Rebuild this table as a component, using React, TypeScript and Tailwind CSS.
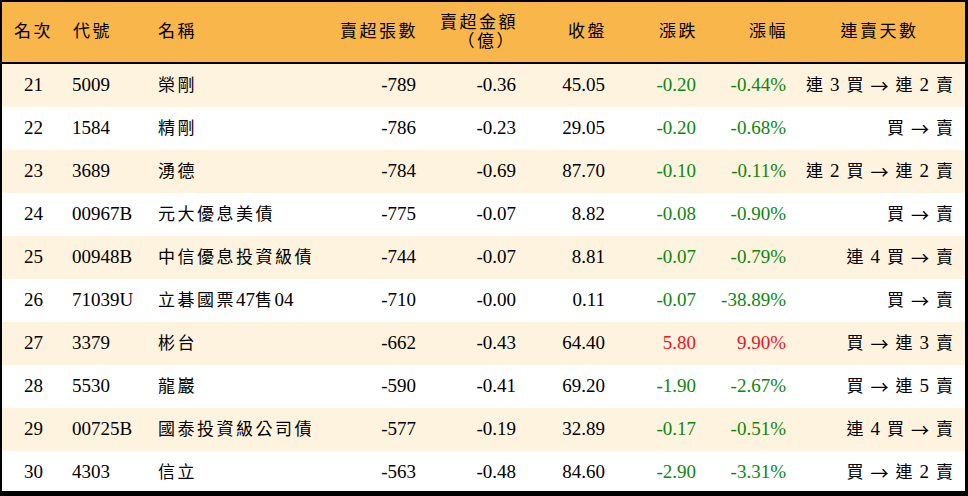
const rows = [
  { rank: 21, code: "5009", name: "榮剛", lots: "-789", amt: "-0.36", close: "45.05", chg: "-0.20", pct: "-0.44%", streak: "連 3 買 → 連 2 賣" },
  { rank: 22, code: "1584", name: "精剛", lots: "-786", amt: "-0.23", close: "29.05", chg: "-0.20", pct: "-0.68%", streak: "買 → 賣" },
  { rank: 23, code: "3689", name: "湧德", lots: "-784", amt: "-0.69", close: "87.70", chg: "-0.10", pct: "-0.11%", streak: "連 2 買 → 連 2 賣" },
  { rank: 24, code: "00967B", name: "元大優息美債", lots: "-775", amt: "-0.07", close: "8.82", chg: "-0.08", pct: "-0.90%", streak: "買 → 賣" },
  { rank: 25, code: "00948B", name: "中信優息投資級債", lots: "-744", amt: "-0.07", close: "8.81", chg: "-0.07", pct: "-0.79%", streak: "連 4 買 → 賣" },
  { rank: 26, code: "71039U", name: "立碁國票47售04", lots: "-710", amt: "-0.00", close: "0.11", chg: "-0.07", pct: "-38.89%", streak: "買 → 賣" },
  { rank: 27, code: "3379", name: "彬台", lots: "-662", amt: "-0.43", close: "64.40", chg: "5.80", pct: "9.90%", streak: "買 → 連 3 賣" },
  { rank: 28, code: "5530", name: "龍巖", lots: "-590", amt: "-0.41", close: "69.20", chg: "-1.90", pct: "-2.67%", streak: "買 → 連 5 賣" },
  { rank: 29, code: "00725B", name: "國泰投資級公司債", lots: "-577", amt: "-0.19", close: "32.89", chg: "-0.17", pct: "-0.51%", streak: "連 4 買 → 賣" },
  { rank: 30, code: "4303", name: "信立", lots: "-563", amt: "-0.48", close: "84.60", chg: "-2.90", pct: "-3.31%", streak: "買 → 連 2 賣" },
];

const font = { fontFamily: '"Liberation Serif", "Noto Sans CJK TC", serif' };

// digits inside a CJK name stay tight, the CJK chars get spaced
function Name({ text }: { text: string }) {
  const parts = text.match(/[0-9]+|[^0-9]+/g) || [];
  return (
    <>
      {parts.map((p, i) =>
        /[0-9]/.test(p) ? (
          <span key={i} className="text-[19px] tracking-normal">{p}</span>
        ) : (
          <span key={i} className="tracking-[2.5px]">{p}</span>
        )
      )}
    </>
  );
}

function Streak({ text }: { text: string }) {
  return (
    <span className="inline-flex items-center gap-[7px]">
      {text.split(" ").map((t, i) => {
        if (t === "→")
          return (
            <span key={i} className="text-[18px]" style={{ fontFamily: '"Noto Sans CJK TC", sans-serif' }}>→</span>
          );
        if (/[0-9]/.test(t)) return <span key={i} className="text-[19px]">{t}</span>;
        return <span key={i}>{t}</span>;
      })}
    </span>
  );
}

export default function App() {
  return (
    <div className="w-[968px] h-[496px] bg-white text-[19px] text-black" style={font}>
      <div className="h-[496px] overflow-hidden border-l-2 border-t-2 border-r-[3px] border-b-[5px] border-black">
        {/* header */}
        <div className="flex h-[62px] items-center bg-[#f9b64b] border-b-2 border-black text-[17px] tracking-[2.5px]">
          <div className="w-[61px] text-center pl-[2px]">名次</div>
          <div className="w-[87px] pl-[10px]">代號</div>
          <div className="w-[180px] pl-[8px]">名稱</div>
          <div className="w-[96px] pr-[8px] text-right">賣超張數</div>
          <div className="w-[100px] pr-[8px] text-right leading-[19px]">
            <div>賣超金額</div>
            <div className="pr-[2px]">（億）</div>
          </div>
          <div className="w-[89px] pr-[8px] text-right">收盤</div>
          <div className="w-[91px] pr-[8px] text-right">漲跌</div>
          <div className="w-[90px] pr-[8px] text-right">漲幅</div>
          <div className="flex-1 text-center pr-[2px]">連賣天數</div>
        </div>
        {rows.map((r, i) => {
          const up = !r.chg.startsWith("-");
          const color = up ? "text-[#f2111d]" : "text-[#0c870c]";
          return (
            <div key={r.rank} className={`flex h-[43px] shrink-0 items-center ${i % 2 === 0 ? "bg-[#fef3df]" : "bg-white"}`}>
              <div className="w-[61px] text-center pl-[2px]">{r.rank}</div>
              <div className="w-[87px] pl-[9px]">{r.code}</div>
              <div className="w-[180px] pl-[8px] text-[17px]">
                <Name text={r.name} />
              </div>
              <div className="w-[96px] pr-[10px] text-right">{r.lots}</div>
              <div className="w-[100px] pr-[10px] text-right">{r.amt}</div>
              <div className="w-[89px] pr-[10px] text-right">{r.close}</div>
              <div className={`w-[91px] pr-[10px] text-right ${color}`}>{r.chg}</div>
              <div className={`w-[90px] pr-[10px] text-right ${color}`}>{r.pct}</div>
              <div className="flex-1 pr-[12px] flex justify-end text-[17px]">
                <Streak text={r.streak} />
              </div>
            </div>
          );
        })}
      </div>
    </div>
  );
}
